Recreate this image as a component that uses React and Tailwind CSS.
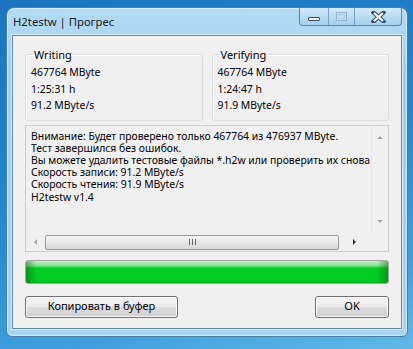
import React from "react";

const lines = [
  "Внимание: Будет проверено только 467764 из 476937 MByte.",
  "Тест завершился без ошибок.",
  "Вы можете удалить тестовые файлы *.h2w или проверить их снова",
  "Скорость записи: 91.2 MByte/s",
  "Скорость чтения: 91.9 MByte/s",
  "H2testw v1.4",
];

function Group({ title, rows }) {
  return (
    <fieldset className="flex-1 rounded-[3px] border border-[#d5dfe5] px-[5px] pt-[2px] pb-[6px] shadow-[inset_1px_1px_0_#fff]">
      <legend className="ml-[2px] px-[1px] text-[11px] leading-[15px]">{title}</legend>
      {rows.map((r) => (
        <div key={r} className="leading-[16.5px]">
          {r}
        </div>
      ))}
    </fieldset>
  );
}

function Arrow({ dir }) {
  const pts = {
    up: "1,5 4,2 7,5",
    down: "1,2 4,5 7,2",
    left: "5,1 2,4 5,7",
    right: "2,1 5,4 2,7",
  }[dir];
  return (
    <svg width="8" height="8" viewBox="0 0 8 8">
      <polygon points={pts} fill={dir === "right" ? "#333" : "#a8a8a8"} />
    </svg>
  );
}

function WinButton({ children, className }) {
  return (
    <div
      className={`flex h-[22px] items-center justify-center rounded-[3px] border border-[#707070] bg-[linear-gradient(to_bottom,#f2f2f2_0%,#ebebeb_50%,#dddddd_50%,#cfcfcf_100%)] shadow-[inset_0_0_0_1px_rgba(255,255,255,0.8)] text-[11px] ${className}`}
    >
      {children}
    </div>
  );
}

export default function App() {
  return (
    <div className="h-[349px] w-[413px] overflow-hidden bg-[linear-gradient(165deg,#1c74bf_0%,#2386cc_45%,#3f9fdc_80%,#62b9e8_100%)] pl-[6px] pt-[7px] font-['Noto_Sans',sans-serif] text-[10.4px] text-black">
      <div className="flex h-[330px] w-[402px] flex-col rounded-t-[8px] rounded-b-[6px] border border-[#4d7ea6] bg-[linear-gradient(to_bottom,#b4dbf5_0%,#a3d0f0_20%,#a9d4f2_100%)] px-[5px] pb-[7px] shadow-[inset_0_0_0_1px_rgba(255,255,255,0.45)]">
        <div className="flex h-[27px] items-start">
          <span className="pl-[1px] pt-[6px] text-[11.3px] text-[#1a1a1a]">
            H2testw | Прогрес
          </span>
          <div className="ml-auto flex h-[18px] overflow-hidden rounded-b-[4px] border border-t-0 border-[#5b84a8] bg-[linear-gradient(to_bottom,#d3ebfa_0%,#b9dcf3_50%,#a6d0ee_100%)]">
            <div className="flex w-[29px] items-center justify-center border-r border-[#7aa2c4]">
              <div className="mt-[5px] h-[4px] w-[12px] rounded-[1px] border border-[#33506a] bg-white" />
            </div>
            <div className="flex w-[26px] items-center justify-center border-r border-[#7aa2c4]">
              <div className="h-[9px] w-[11px] border border-[#8fb4d2] bg-[#c6e0f3] p-[1px]">
                <div className="h-full w-full border border-[#a9c8e0]" />
              </div>
            </div>
            <div className="flex w-[46px] items-center justify-center">
              <svg width="15" height="12" viewBox="0 0 15 12">
                <path d="M2.5 1.5 L12.5 10.5 M12.5 1.5 L2.5 10.5" stroke="#33506a" strokeWidth="4.2" strokeLinecap="square" />
                <path d="M3 2 L12 10 M12 2 L3 10" stroke="#ffffff" strokeWidth="2.2" />
              </svg>
            </div>
          </div>
        </div>

        <div className="flex flex-1 flex-col border border-[#6a8aa8] bg-[#f0f0f0] px-[12px] pt-[11px] shadow-[0_0_0_1px_rgba(255,255,255,0.5)]">
          <div className="flex gap-[9px]">
            <Group title="Writing" rows={["467764 MByte", "1:25:31 h", "91.2 MByte/s"]} />
            <Group title="Verifying" rows={["467764 MByte", "1:24:47 h", "91.9 MByte/s"]} />
          </div>

          <div className="mt-[4px] flex h-[127px] flex-col border border-[#c9ced4] bg-[#f0f0f0]">
            <div className="flex min-h-0 flex-1">
              <div className="min-w-0 flex-1 overflow-hidden whitespace-nowrap pl-[5px] pt-[4px]">
                {lines.map((l) => (
                  <div key={l} className="leading-[12.2px]">
                    {l}
                  </div>
                ))}
              </div>
              <div className="flex w-[17px] flex-col items-center justify-between bg-[#f0f0f0] py-[8px] shadow-[inset_1px_0_0_#e6e6e6]">
                <Arrow dir="up" />
                <Arrow dir="down" />
              </div>
            </div>
            <div className="flex h-[17px] items-center">
              <div className="flex w-[19px] justify-center">
                <Arrow dir="left" />
              </div>
              <div className="flex h-[15px] w-[294px] items-center justify-center rounded-[2px] border border-[#9a9a9a] bg-[linear-gradient(to_bottom,#f6f6f6_0%,#e6e6e6_50%,#d6d6d6_100%)]">
                <div className="flex gap-[2px]">
                  <div className="h-[6px] w-[1px] bg-[#666]" />
                  <div className="h-[6px] w-[1px] bg-[#666]" />
                  <div className="h-[6px] w-[1px] bg-[#666]" />
                </div>
              </div>
              <div className="flex flex-1 justify-center">
                <Arrow dir="right" />
              </div>
              <div className="h-[17px] w-[17px] bg-[#f0f0f0]" />
            </div>
          </div>

          <div className="mt-[8px] h-[24px] rounded-[3px] border border-[#a6a6a6] bg-[linear-gradient(to_right,rgba(0,90,10,0.45)_0%,rgba(0,90,10,0)_3%,rgba(0,90,10,0)_97%,rgba(0,90,10,0.45)_100%),linear-gradient(to_bottom,#bdf2c2_0%,#8fe69a_18%,#5ad96a_26%,#02cc24_32%,#03cb23_85%,#04b820_100%)]" />

          <div className="mt-[12px] flex justify-between">
            <WinButton className="w-[153px]">Копировать в буфер</WinButton>
            <WinButton className="w-[74px]">OK</WinButton>
          </div>
        </div>
      </div>
    </div>
  );
}
